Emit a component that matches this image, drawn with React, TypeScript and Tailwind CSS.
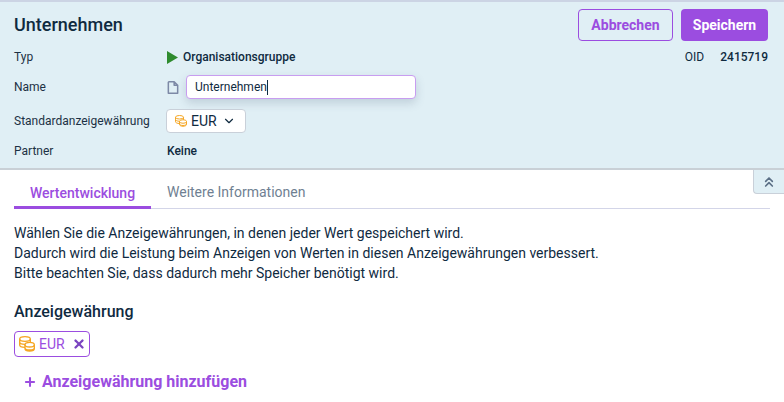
import { ChevronDown, ChevronsUp, Plus, X } from "lucide-react";

function Coins({ className }: { className: string }) {
  return (
    <svg viewBox="0 0 24 24" fill="none" stroke="currentColor" strokeWidth="2" className={className}>
      <ellipse cx="9" cy="4.500" rx="8" ry="3.500" />
      <path d="M1 4.500v4.500c0 1.900 3.500 3.500 8 3.500M1 9v4.500c0 1.900 3.500 3.500 8 3.500" />
      <path d="M17 4.500v5" />
      <ellipse cx="16" cy="13" rx="7" ry="3.500" />
      <path d="M9 13v6c0 1.900 3 3.500 7 3.500s7-1.600 7-3.500v-6M9 17.500c0 1.900 3 3.500 7 3.500s7-1.600 7-3.500" />
    </svg>
  );
}

function Row({ label, className, children }: { label: string; className: string; children: React.ReactNode }) {
  return (
    <div className={`flex items-center ${className}`}>
      <div className="w-[152px] text-[12px] text-[#1c3144]">{label}</div>
      {children}
    </div>
  );
}

export default function App() {
  return (
    <div className="w-[784px] h-[402px] overflow-hidden bg-white font-['Roboto',sans-serif] text-[#0f2a3f]">
      <div className="h-[170px] bg-[#e0eff5] border-t-2 border-b-2 border-t-[#ccd4e4] border-b-[#c9d0d6] pl-[14px] pr-4">
        <div className="flex justify-between items-start pt-[7px]">
          <h1 className="text-[18px] font-medium leading-[32px]">Unternehmen</h1>
          <div className="flex gap-2">
            <button className="w-[95px] h-[32px] rounded border border-[#9b4de0] text-[14px] font-bold text-[#9b4de0]">Abbrechen</button>
            <button className="w-[87px] h-[32px] rounded bg-[#9b4de0] text-[14px] font-bold text-white">Speichern</button>
          </div>
        </div>
        <div className="flex justify-between items-center mt-[8px] h-[16px]">
          <Row label="Typ" className="">
            <div className="flex items-center gap-[5px] text-[12px] font-medium ml-px">
              <svg viewBox="0 0 12 14" className="w-[11px] h-[13px] text-[#2e8b2e]" fill="currentColor">
                <path d="M0 0l12 7-12 7z" />
              </svg>
              Organisationsgruppe
            </div>
          </Row>
          <div className="flex gap-[16px] text-[12px]">
            <span>OID</span>
            <span className="font-medium">2415719</span>
          </div>
        </div>
        <Row label="Name" className="mt-[10px]">
          <svg viewBox="0 0 24 24" fill="none" stroke="#7d89a6" strokeWidth="2.600" strokeLinejoin="round" className="w-[14px] h-[17px] mr-[6px] shrink-0">
            <path d="M5 2h9l6 6v14H4V3zM14 2v6h6" />
          </svg>
          <div className="w-[230px] h-[24px] flex items-center pl-2 rounded bg-white border border-[#c89df0] shadow-[0_4px_10px_rgba(60,80,110,0.2)] text-[12px]">
            Unternehmen<span className="w-px h-[15px] bg-[#0f2a3f]" />
          </div>
        </Row>
        <Row label="Standardanzeigewährung" className="mt-[10px]">
          <div className="w-[80px] h-[24px] flex items-center pl-2 rounded bg-white border border-[#c9d0d9] text-[14px]">
            <Coins className="w-[12px] h-[12px] text-[#f5a623] mr-[4px]" />
            EUR
            <ChevronDown className="w-[14px] h-[14px] ml-[5px]" />
          </div>
        </Row>
        <Row label="Partner" className="mt-[9px]">
          <div className="text-[12px] font-medium ml-px">Keine</div>
        </Row>
      </div>
      <div className="relative">
        <div className="absolute right-0 top-0 w-[31px] h-[24px] bg-[#e0eff5] border-l border-b border-[#c9d0d9] rounded-bl flex items-center justify-center">
          <ChevronsUp className="w-[16px] h-[16px] text-[#5b6f86]" strokeWidth={2.5} />
        </div>
        <div className="mx-[14px] flex h-[39px] items-end border-b border-[#d3d5e8] text-[14px]">
          <div className="w-[137px] h-[26px] text-center font-medium text-[#9b4de0] border-b-[3px] border-[#9b4de0] -mb-px">Wertentwicklung</div>
          <div className="pl-4 h-[26px] text-[#6f7f92]">Weitere Informationen</div>
        </div>
        <div className="px-[14px] pt-[14px]">
          <p className="text-[14px] leading-[20px] text-[#0f2a3f]">
            Wählen Sie die Anzeigewährungen, in denen jeder Wert gespeichert wird.<br />
            Dadurch wird die Leistung beim Anzeigen von Werten in diesen Anzeigewährungen verbessert.<br />
            Bitte beachten Sie, dass dadurch mehr Speicher benötigt wird.
          </p>
          <h2 className="mt-[17px] text-[16px] font-medium leading-[24px]">Anzeigewährung</h2>
          <div className="mt-[7px] w-[76px] h-[26px] flex items-center pl-[4px] rounded border border-[#9b4de0] text-[14px] text-[#9b4de0]">
            <Coins className="w-[16px] h-[16px] text-[#f5a623] mr-[4px]" />
            EUR
            <X className="w-[14px] h-[14px] ml-[7px] text-[#7a45c0]" strokeWidth={4} />
          </div>
          <div className="mt-[13px] ml-[9px] flex items-center gap-[5px] text-[16px] font-bold text-[#9b4de0]">
            <Plus className="w-[14px] h-[14px]" strokeWidth={3.500} />
            Anzeigewährung hinzufügen
          </div>
        </div>
      </div>
    </div>
  );
}
